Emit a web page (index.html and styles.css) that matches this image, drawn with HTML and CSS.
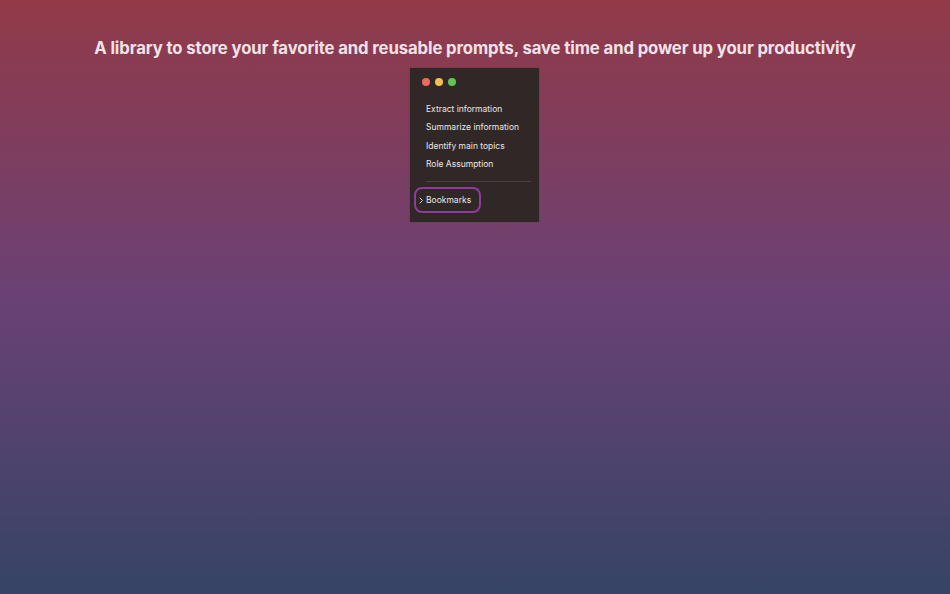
FILE: index.html
```html
<!DOCTYPE html>
<html>
<head>
<meta charset="utf-8">
<link rel="stylesheet" href="styles.css">
</head>
<body>
<main class="page">
  <h1 class="headline">A library to store your favorite and reusable prompts, save time and power up your productivity</h1>
  <div class="window">
    <div class="traffic">
      <span class="dot red"></span>
      <span class="dot yellow"></span>
      <span class="dot green"></span>
    </div>
    <ul class="list">
      <li>Extract information</li>
      <li>Summarize information</li>
      <li>Identify main topics</li>
      <li>Role Assumption</li>
    </ul>
    <div class="sep"></div>
    <div class="bookmarks">
      <svg class="chev" width="5" height="7" viewBox="0 0 5 7"><path d="M1 1 L3.5 3.5 L1 6" fill="none" stroke="#d8d2d0" stroke-width="1" stroke-linecap="round" stroke-linejoin="round"/></svg>
      <span>Bookmarks</span>
    </div>
  </div>
</main>
</body>
</html>
```
FILE: styles.css
```css
html, body {
  margin: 0;
  padding: 0;
  height: 100%;
}
body {
  background: linear-gradient(180deg, #923a48 0%, #6a4175 50%, #364466 100%);
  font-family: Inter, "Noto Sans", sans-serif;
  overflow: hidden;
}
.page {
  display: flex;
  flex-direction: column;
  align-items: center;
  padding-top: 37px;
}
.headline {
  margin: 0;
  font-size: 16.7px;
  font-weight: 700;
  color: #f2e2e8;
  letter-spacing: -0.1px;
  line-height: 22px;
}
.window {
  margin-top: 9px;
  margin-right: 1px;
  width: 129px;
  height: 154px;
  background: #302826;
  box-sizing: border-box;
  padding: 10px 8px 0 4px;
  box-shadow: 0 0 1px rgba(0,0,0,0.3);
}
.traffic {
  display: flex;
  gap: 5px;
  padding-left: 8px;
}
.dot {
  width: 8px;
  height: 8px;
  border-radius: 50%;
}
.red { background: #ed6a5e; }
.yellow { background: #f5bf4f; }
.green { background: #61c554; }
.list {
  list-style: none;
  margin: 14px 0 0 0;
  padding: 0 0 0 12px;
}
.list li {
  font-size: 8.5px;
  line-height: 18.3px;
  color: #ece6e4;
}
.sep {
  margin: 8px 0 0 12px;
  height: 1px;
  background: #4a4240;
}
.bookmarks {
  margin-top: 5px;
  width: 67px;
  height: 26px;
  box-sizing: border-box;
  border: 2px solid #8e3b9e;
  border-radius: 8px;
  display: flex;
  align-items: center;
  padding-left: 3px;
  gap: 2px;
  font-size: 8.5px;
  color: #ece6e4;
}
.chev { flex: none; }
```
